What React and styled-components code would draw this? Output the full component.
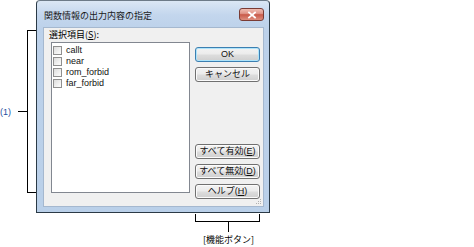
import React from 'react'
import styled, { createGlobalStyle } from 'styled-components'

const GlobalStyle = createGlobalStyle`
  html, body { margin: 0; padding: 0; background: #fff; }
  body {
    width: 474px; height: 247px; overflow: hidden;
    font-family: "Liberation Sans", "Noto Sans CJK JP", sans-serif;
  }
`

const items = ['callt', 'near', 'rom_forbid', 'far_forbid']

const Key = ({ k }) => (
  <>(<u>{k}</u>)</>
)

const App = () => {
  return (
    <Page>
      <GlobalStyle />
      <LeftNote>
        <NoteLabel>(1)</NoteLabel>
        <Tick />
        <SideBracket />
      </LeftNote>
      <Column>
        <Dialog>
          <TitleBar>
            <Title>関数情報の出力内容の指定</Title>
            <CloseBtn>
              <svg width="10" height="8" viewBox="0 0 10 8">
                <path d="M2 1.5 L8 6.5 M8 1.5 L2 6.5" stroke="#fff" strokeWidth="1.8" strokeLinecap="square" />
              </svg>
            </CloseBtn>
          </TitleBar>
          <Client>
            <ListSide>
              <ListLabel>選択項目<Key k="S" />:</ListLabel>
              <ListBox>
                {items.map((name) => (
                  <Item key={name}>
                    <Check />
                    <span>{name}</span>
                  </Item>
                ))}
              </ListBox>
            </ListSide>
            <Buttons>
              <Btn $primary>OK</Btn>
              <Btn>キャンセル</Btn>
              <LowerGroup>
                <Btn>すべて有効<Key k="E" /></Btn>
                <Btn>すべて無効<Key k="D" /></Btn>
                <Btn>ヘルプ<Key k="H" /></Btn>
              </LowerGroup>
            </Buttons>
            <Grip>
              <svg width="8" height="8" viewBox="0 0 8 8">
                {[[6, 2], [4, 4], [6, 4], [2, 6], [4, 6], [6, 6]].map(([x, y]) => (
                  <rect key={x + '-' + y} x={x} y={y} width="1" height="1" fill="#b0b0b0" />
                ))}
              </svg>
            </Grip>
          </Client>
        </Dialog>
        <BottomNote>
          <BottomBracket />
          <DownTick />
          <NoteText>[機能ボタン]</NoteText>
        </BottomNote>
      </Column>
    </Page>
  )
}

export default App

const Page = styled.div`
  display: flex;
  align-items: flex-start;
`

const LeftNote = styled.div`
  width: 36px;
  height: 163px;
  margin-top: 30px;
  display: flex;
  align-items: center;
`

const NoteLabel = styled.div`
  width: 18px;
  font-size: 9px;
  color: #1f4f9f;
  line-height: 10px;
`

const Tick = styled.div`
  width: 9px;
  height: 1px;
  background: #000;
`

const SideBracket = styled.div`
  width: 8px;
  height: 161px;
  border: 1px solid #000;
  border-right: none;
`

const Column = styled.div`
  display: flex;
  flex-direction: column;
  width: 234px;
`

const Dialog = styled.div`
  height: 206px;
  width: 221px;
  box-sizing: content-box;
  border: 1px solid #2b3a46;
  border-top-color: #6d7b88;
  border-radius: 4px 4px 0 0;
  background: linear-gradient(180deg, #dbe7f4 0px, #c3d6ed 14px, #bcd1ea 30px, #bad0e9 100%);
  display: flex;
  flex-direction: column;
  padding: 0 5px 5px 6px;
`

const TitleBar = styled.div`
  height: 26px;
  display: flex;
  align-items: center;
  justify-content: space-between;
  padding-left: 1px;
`

const Title = styled.div`
  font-family: "Noto Sans CJK JP", sans-serif;
  font-size: 9px;
  color: #1a1a1a;
  margin-top: 2px;
`

const CloseBtn = styled.div`
  width: 23px;
  height: 11px;
  margin-top: 1px;
  border: 1px solid #7a3b34;
  border-radius: 3px;
  background: linear-gradient(180deg, #f0bdb2 0%, #e0968a 40%, #c95a4a 52%, #dd8e7e 100%);
  display: flex;
  align-items: center;
  justify-content: center;
`

const Client = styled.div`
  height: 180px;
  box-sizing: border-box;
  position: relative;
  background: #f0f0f0;
  border: 1px solid #a5b8cf;
  display: flex;
  padding: 0 2px 0 7px;
`

const ListSide = styled.div`
  display: flex;
  flex-direction: column;
`

const ListLabel = styled.div`
  height: 14px;
  line-height: 13px;
  margin-left: -2px;
  font-family: "Noto Sans CJK JP", sans-serif;
  font-size: 9px;
  color: #000;
  u { text-decoration: underline; }
`

const ListBox = styled.div`
  width: 139px;
  height: 151px;
  box-sizing: border-box;
  background: #fff;
  border: 1px solid #828790;
  padding-top: 2px;
  display: flex;
  flex-direction: column;
`

const Item = styled.div`
  height: 11px;
  display: flex;
  align-items: center;
  gap: 4px;
  padding-left: 1px;
  font-size: 9px;
  color: #111;
  line-height: 11px;
`

const Check = styled.div`
  width: 9px;
  height: 9px;
  box-sizing: border-box;
  border: 1px solid #8f8f8f;
  background: linear-gradient(135deg, #dcdcdc 0%, #f4f4f4 70%, #fbfbfb 100%);
`

const Buttons = styled.div`
  display: flex;
  flex-direction: column;
  gap: 5px;
  margin-left: 5px;
  padding-top: 19px;
`

const LowerGroup = styled.div`
  display: flex;
  flex-direction: column;
  gap: 5px;
  margin-top: 57px;
`

const Btn = styled.div`
  width: 65px;
  height: 15px;
  box-sizing: border-box;
  border: 1px solid ${(p) => (p.$primary ? '#3c7fb1' : '#707070')};
  border-radius: 3px;
  box-shadow: inset 0 0 0 1px ${(p) => (p.$primary ? '#aee4fb' : '#fbfbfb')};
  background: linear-gradient(180deg, #f3f3f3 0%, #ebebeb 48%, #dddddd 52%, #cfcfcf 100%);
  display: flex;
  align-items: center;
  justify-content: center;
  font-family: "Liberation Sans", "Noto Sans CJK JP", sans-serif;
  font-size: 9px;
  color: #111;
  line-height: 13px;
  u { text-decoration: underline; }
`

const Grip = styled.div`
  position: absolute;
  right: 1px;
  bottom: 1px;
  width: 8px;
  height: 8px;
  line-height: 0;
`

const BottomNote = styled.div`
  margin-left: 159px;
  width: 65px;
  display: flex;
  flex-direction: column;
  align-items: center;
`

const BottomBracket = styled.div`
  width: 63px;
  height: 7px;
  margin-top: 1px;
  border: 1px solid #000;
  border-top: none;
`

const DownTick = styled.div`
  width: 1px;
  height: 10px;
  background: #000;
  margin-left: 2px;
`

const NoteText = styled.div`
  margin-top: 3px;
  margin-left: 2px;
  font-family: "Noto Sans CJK JP", sans-serif;
  font-size: 9px;
  line-height: 10px;
  color: #000;
  white-space: nowrap;
`
